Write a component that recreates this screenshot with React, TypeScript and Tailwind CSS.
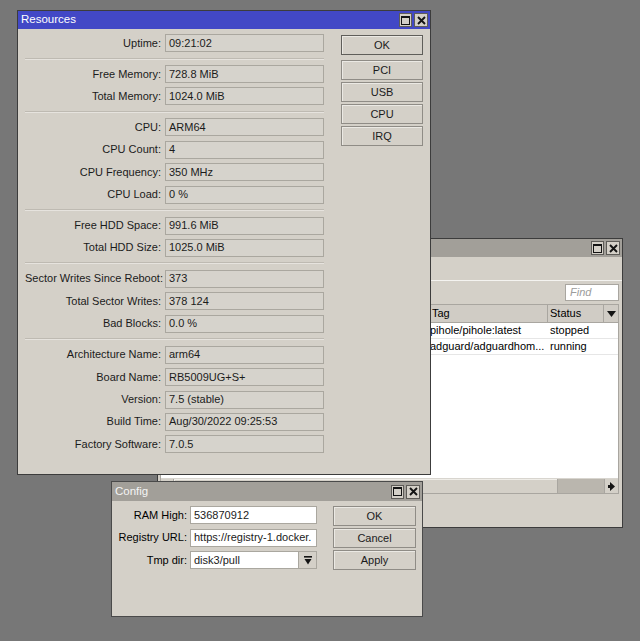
import React from "react";

const font = "font-['Liberation_Sans',Arial,sans-serif]";

function TitleButtons() {
  return (
    <div className="flex gap-[2px]">
      <div className="w-[13px] h-[14px] bg-[#d4d0c8] border border-[#5e5c58] flex items-center justify-center">
        <svg width="9" height="9" viewBox="0 0 9 9">
          <rect x="0.5" y="0.5" width="8" height="8" fill="none" stroke="#141414" />
          <rect x="0" y="0" width="9" height="2" fill="#141414" />
        </svg>
      </div>
      <div className="w-[14px] h-[14px] bg-[#d4d0c8] border border-[#5e5c58] flex items-center justify-center">
        <svg width="9" height="9" viewBox="0 0 9 9">
          <path d="M1 1L8 8M8 1L1 8" stroke="#141414" strokeWidth="1.9" />
        </svg>
      </div>
    </div>
  );
}

function Field({ value }: { value: string }) {
  return (
    <div className="w-[159px] h-[18px] border border-[#aaa79f] bg-[#d6d3cc] flex items-center pl-[3px] text-[#1b1b1b] whitespace-nowrap overflow-hidden">
      {value}
    </div>
  );
}

function Row({ label, value }: { label: string; value: string }) {
  return (
    <div className="flex items-center gap-[4px] h-[18px]">
      <div className="w-[136px] text-right text-[#1b1b1b] whitespace-nowrap">{label}</div>
      <Field value={value} />
    </div>
  );
}

function Separator() {
  return (
    <div className="h-[13px] flex items-center">
      <div className="w-full h-[2px] border-t border-[#bebab2] border-b border-b-[#e6e3de]" />
    </div>
  );
}

function Btn({ label, primary }: { label: string; primary?: boolean }) {
  return (
    <div
      className={
        "h-[20px] flex items-center justify-center bg-[#d4d0c8] text-[#1b1b1b] border shadow-[inset_1px_1px_0_#ebe9e4] " +
        (primary ? "border-[#5f5e5a]" : "border-[#8f8c86]")
      }
    >
      {label}
    </div>
  );
}

const groups: [string, string][][] = [
  [["Uptime:", "09:21:02"]],
  [
    ["Free Memory:", "728.8 MiB"],
    ["Total Memory:", "1024.0 MiB"],
  ],
  [
    ["CPU:", "ARM64"],
    ["CPU Count:", "4"],
    ["CPU Frequency:", "350 MHz"],
    ["CPU Load:", "0 %"],
  ],
  [
    ["Free HDD Space:", "991.6 MiB"],
    ["Total HDD Size:", "1025.0 MiB"],
  ],
  [
    ["Sector Writes Since Reboot:", "373"],
    ["Total Sector Writes:", "378 124"],
    ["Bad Blocks:", "0.0 %"],
  ],
  [
    ["Architecture Name:", "arm64"],
    ["Board Name:", "RB5009UG+S+"],
    ["Version:", "7.5 (stable)"],
    ["Build Time:", "Aug/30/2022 09:25:53"],
    ["Factory Software:", "7.0.5"],
  ],
];

function ResourcesWindow() {
  return (
    <div className="absolute left-[17px] top-[10px] w-[414px] h-[465px] bg-[#d4d0c8] border border-[#3c3c3c] flex flex-col z-10">
      <div className="h-[18px] bg-[#4248c6] flex items-center justify-between pl-[3px] pr-[2px]">
        <span className="text-white text-[11.5px]">Resources</span>
        <TitleButtons />
      </div>
      <div className="flex pl-[7px] pt-[5px]">
        <div className="w-[299px] flex flex-col">
          {groups.map((g, gi) => (
            <React.Fragment key={gi}>
              {gi > 0 && <Separator />}
              <div className="flex flex-col gap-[4.4px]">
                {g.map(([l, v]) => (
                  <Row key={l} label={l} value={v} />
                ))}
              </div>
            </React.Fragment>
          ))}
        </div>
        <div className="ml-[17px] w-[82px] flex flex-col pt-[1px]">
          <Btn label="OK" primary />
          <div className="mt-[5px] flex flex-col gap-[2px]">
            <Btn label="PCI" />
            <Btn label="USB" />
            <Btn label="CPU" />
            <Btn label="IRQ" />
          </div>
        </div>
      </div>
    </div>
  );
}

const rows = [
  { tag: "pihole/pihole:latest", status: "stopped" },
  { tag: "adguard/adguardhom...", status: "running" },
];

function ContainerWindow() {
  return (
    <div className="absolute left-[157px] top-[238px] w-[466px] h-[290px] bg-[#d4d0c8] border border-[#3c3c3c] flex flex-col z-0">
      <div className="h-[18px] bg-[#a29f99] flex items-center justify-end pr-[2px]">
        <TitleButtons />
      </div>
      <div className="h-[24px] border-b border-[#f4f3f0]" />
      <div className="h-[23px] flex items-center justify-end pr-[3px]">
        <div className="w-[54px] h-[17px] bg-white border border-[#a9a6a0] flex items-center pl-[4px] italic text-[#9b9b9b]">
          Find
        </div>
      </div>
      <div className="ml-[2px] mr-[3px] flex flex-col bg-white h-[190px] border border-[#a9a6a0]">
        <div className="flex h-[18px] bg-[#d0ccc5] border-b border-[#a9a6a0]">
          <div className="w-[268px] border-r border-[#a9a6a0]" />
          <div className="w-[119px] flex items-center border-r border-[#a9a6a0] pl-[3px]">Tag</div>
          <div className="w-[56px] flex items-center border-r border-[#a9a6a0] pl-[2px]">Status</div>
          <div className="flex-1 flex items-center justify-center">
            <svg width="9" height="6" viewBox="0 0 9 6">
              <path d="M0 0H9L4.5 6Z" fill="#141414" />
            </svg>
          </div>
        </div>
        {rows.map((r) => (
          <div key={r.tag} className="flex h-[16px] border-b border-[#e6e6e6] whitespace-nowrap">
            <div className="w-[268px]" />
            <div className="w-[119px] flex items-center pl-[1px] overflow-hidden">{r.tag}</div>
            <div className="w-[56px] flex items-center pl-[2px]">{r.status}</div>
          </div>
        ))}
        <div className="flex-1" />
        <div className="h-[15px] flex bg-[#bab6ae] border-t border-[#d8d5cf]">
          <div className="w-[13px] bg-[#d4d0c8] border-r border-[#a9a6a0]" />
          <div className="w-[384px] bg-[#d4d0c8] border-r border-[#a9a6a0] shadow-[inset_1px_1px_0_#efede8]" />
          <div className="flex-1" />
          <div className="w-[14px] bg-[#d4d0c8] border-l border-[#a9a6a0] flex items-center justify-center">
            <svg width="7" height="9" viewBox="0 0 7 9">
              <path d="M0 3H2V0L7 4.5L2 9V6H0Z" fill="#141414" />
            </svg>
          </div>
        </div>
      </div>
    </div>
  );
}

function Input({ value, wide = true }: { value: string; wide?: boolean }) {
  return (
    <div
      className={
        "h-[18px] bg-white border border-[#aaa79f] flex items-center pl-[3px] whitespace-nowrap overflow-hidden text-[#1b1b1b] " +
        (wide ? "w-[127px]" : "w-[109px]")
      }
    >
      {value}
    </div>
  );
}

function ConfigWindow() {
  return (
    <div className="absolute left-[111px] top-[481px] w-[312px] h-[136px] bg-[#d4d0c8] border border-[#4a4a4a] flex flex-col z-20">
      <div className="h-[19px] bg-[#a29f99] flex items-center justify-between pl-[3px] pr-[2px]">
        <span className="text-[#f4f4f4] text-[11.5px]">Config</span>
        <TitleButtons />
      </div>
      <div className="flex pt-[5px] pl-[5px]">
        <div className="flex flex-col gap-[4.5px]">
          <div className="flex items-center gap-[3px]">
            <div className="w-[70px] text-right whitespace-nowrap">RAM High:</div>
            <Input value="536870912" />
          </div>
          <div className="flex items-center gap-[3px]">
            <div className="w-[70px] text-right whitespace-nowrap">Registry URL:</div>
            <Input value="https://registry-1.docker." />
          </div>
          <div className="flex items-center gap-[3px]">
            <div className="w-[70px] text-right whitespace-nowrap">Tmp dir:</div>
            <div className="flex">
              <Input value="disk3/pull" wide={false} />
              <div className="w-[18px] h-[18px] bg-[#d4d0c8] border border-[#aaa79f] border-l-0 flex items-center justify-center">
                <svg width="8" height="9" viewBox="0 0 8 9">
                  <rect x="0" y="0" width="8" height="1.6" fill="#141414" />
                  <path d="M0.5 3H7.5L4 8.5Z" fill="#141414" />
                </svg>
              </div>
            </div>
          </div>
        </div>
        <div className="ml-[16px] w-[83px] flex flex-col gap-[2px]">
          <Btn label="OK" />
          <Btn label="Cancel" />
          <Btn label="Apply" />
        </div>
      </div>
    </div>
  );
}

export default function App() {
  return (
    <div className={"relative w-[640px] h-[641px] overflow-hidden bg-[#777777] text-[11px] leading-none " + font}>
      <ContainerWindow />
      <ResourcesWindow />
      <ConfigWindow />
    </div>
  );
}
